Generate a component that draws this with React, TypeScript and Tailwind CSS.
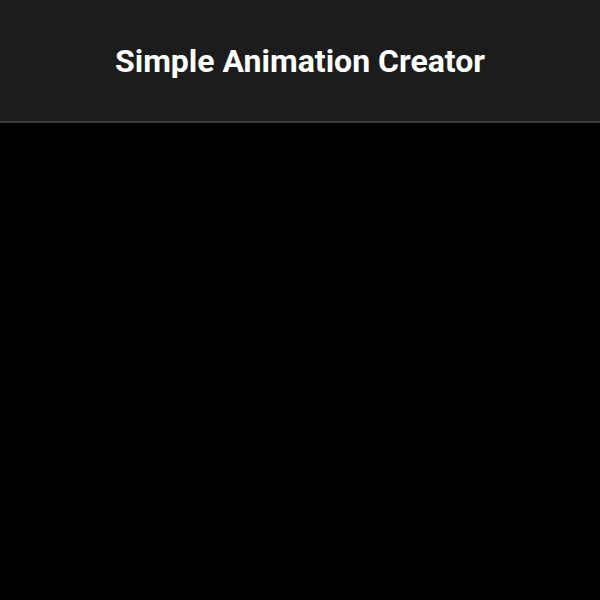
export default function App() {
  return (
    <div className="flex h-[600px] w-[600px] flex-col bg-black font-['Roboto',sans-serif]">
      <header className="flex h-[123px] shrink-0 items-center justify-center border-b-2 border-[#3a3a3a] bg-[#1c1c1c]">
        <h1 className="text-[32px] font-bold leading-none text-white">Simple Animation Creator</h1>
      </header>
      <main className="flex-1 bg-black" />
    </div>
  );
}
